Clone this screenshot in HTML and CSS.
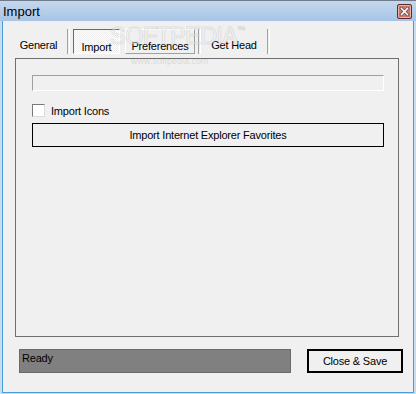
FILE: index.html
```html
<!DOCTYPE html>
<html lang="en">
<head>
<meta charset="utf-8">
<title>Import</title>
<link rel="stylesheet" href="styles.css">
</head>
<body>
<div class="window">
    <div class="titlebar">
        <span class="title">Import</span>
        <span class="close">
            <svg width="15" height="15" viewBox="0 0 15 15">
                <rect x="0.5" y="0.5" width="14" height="14" rx="1.5" fill="#c97a6e" stroke="#5b2a2c"/>
                <rect x="1.5" y="1.5" width="12" height="12" rx="1" fill="none" stroke="#e9b3a6"/>
                <path d="M4.5 4.5 L10.5 10.5 M10.5 4.5 L4.5 10.5" stroke="#6b3a3a" stroke-width="3" stroke-linecap="square"/>
                <path d="M4.5 4.5 L10.5 10.5 M10.5 4.5 L4.5 10.5" stroke="#fff" stroke-width="1.6" stroke-linecap="square"/>
            </svg>
        </span>
    </div>
    <div class="client">
        <!-- watermark from the original screenshot -->
        <div class="mark">SOFTPEDIA<sup>™</sup></div>
        <div class="mark_url">www.softpedia.com</div>

        <div class="tabs">
            <div class="tab tab_general">General</div>
            <div class="sep"></div>
            <div class="tab tab_import">Import</div>
            <div class="tab tab_prefs">Preferences</div>
            <div class="sep"></div>
            <div class="tab tab_head">Get Head</div>
            <div class="sep"></div>
        </div>

        <div class="panel">
            <div class="field"></div>
            <label class="check_row"><span class="checkbox"></span>Import Icons</label>
            <div class="button wide">Import Internet Explorer Favorites</div>
        </div>

        <div class="footer">
            <div class="status">Ready</div>
            <div class="button default">Close &amp; Save</div>
        </div>
    </div>
</div>
</body>
</html>
```

FILE: styles.css
```css
body {
    margin: 0;
    font-family: "Liberation Sans", Arial, sans-serif;
    font-size: 11px;
    letter-spacing: -0.2px;
    color: #000;
}

.window {
    width: 416px;
    height: 394px;
    box-sizing: border-box;
    border-top: 1px solid #6d7b8a;
    background: #c9dcf0;
    display: flex;
    flex-direction: column;
}

.titlebar {
    height: 20px;
    background: linear-gradient(#c4d8ee, #a8c4e5);
    display: flex;
    align-items: center;
    justify-content: space-between;
    padding: 0 3px 0 3px;
}
.title {
    font-size: 13px;
    letter-spacing: 0;
    margin-top: 1px;
}
.close {
    display: flex;
    margin-right: 1px;
}

.client {
    position: relative;
    flex: 1;
    margin: 0 2px 1px 2px;
    border: 1px solid #4a9fd9;
    border-top: none;
    background: #f0f0f0;
}

/* tab strip, looks like toolbar buttons */
.tabs {
    display: flex;
    height: 25px;
    margin-top: 8px;
}
.tab {
    box-sizing: border-box;
    text-align: center;
    padding-top: 10px;
    line-height: 13px;
}
.tab_general { width: 51px; margin-left: 10px; }
.tab_import {
    width: 47px;
    margin-left: 3px;
    padding-top: 11px;
    border: 1px solid;
    border-color: #6a6a6a #fff #fff #6a6a6a;
    background: repeating-conic-gradient(#fff 0 25%, #ececec 0 50%) 0 0 / 2px 2px;
}
.tab_prefs {
    width: 70px;
    margin-left: 5px;
    border: 1px solid;
    border-color: #fff #a0a0a0 #a0a0a0 #fff;
}
.tab_head { width: 66px; }
.sep {
    width: 1px;
    border-left: 1px solid #a0a0a0;
    border-right: 1px solid #fff;
    margin-left: 3px;
}
.tabs .tab_head + .sep { margin-left: 0; }

.panel {
    height: 279px;
    box-sizing: border-box;
    margin: 4px 14px 0 12px;
    border: 1px solid #6f6f6f;
    padding: 16px 14px 0 16px;
}

.field {
    height: 16px;
    box-sizing: border-box;
    border: 1px solid;
    border-color: #a0a0a0 #fff #fff #a0a0a0;
}

.check_row {
    display: flex;
    align-items: center;
    margin-top: 13px;
    height: 13px;
}
.checkbox {
    width: 13px;
    height: 13px;
    box-sizing: border-box;
    border: 1px solid;
    border-color: #7a7a7a #dcdcdc #dcdcdc #7a7a7a;
    background: #fff;
    margin-right: 6px;
}

.button {
    box-sizing: border-box;
    display: flex;
    align-items: center;
    justify-content: center;
    height: 24px;
    background: #f0f0f0;
    border: 1px solid #000;
}
.wide { margin-top: 6px; }

.footer {
    display: flex;
    margin-top: 12px;
}
.status {
    width: 272px;
    height: 24px;
    box-sizing: border-box;
    margin-left: 16px;
    background: #808080;
    border: 1px solid #6a6a6a;
    padding: 2px 0 0 2px;
}
.default {
    width: 96px;
    margin-left: 16px;
    border: 2px solid #000;
}

.mark {
    position: absolute;
    left: 107px;
    top: 1px;
    font-size: 24px;
    letter-spacing: -1px;
    color: rgba(255, 255, 255, 0.4);
    -webkit-text-stroke: 1px rgba(170, 170, 170, 0.3);
    pointer-events: none;
}
.mark sup { font-size: 8px; vertical-align: 12px; }
.mark_url {
    position: absolute;
    left: 128px;
    top: 35px;
    font-size: 9px;
    letter-spacing: 0;
    color: rgba(170, 170, 170, 0.35);
}
```
